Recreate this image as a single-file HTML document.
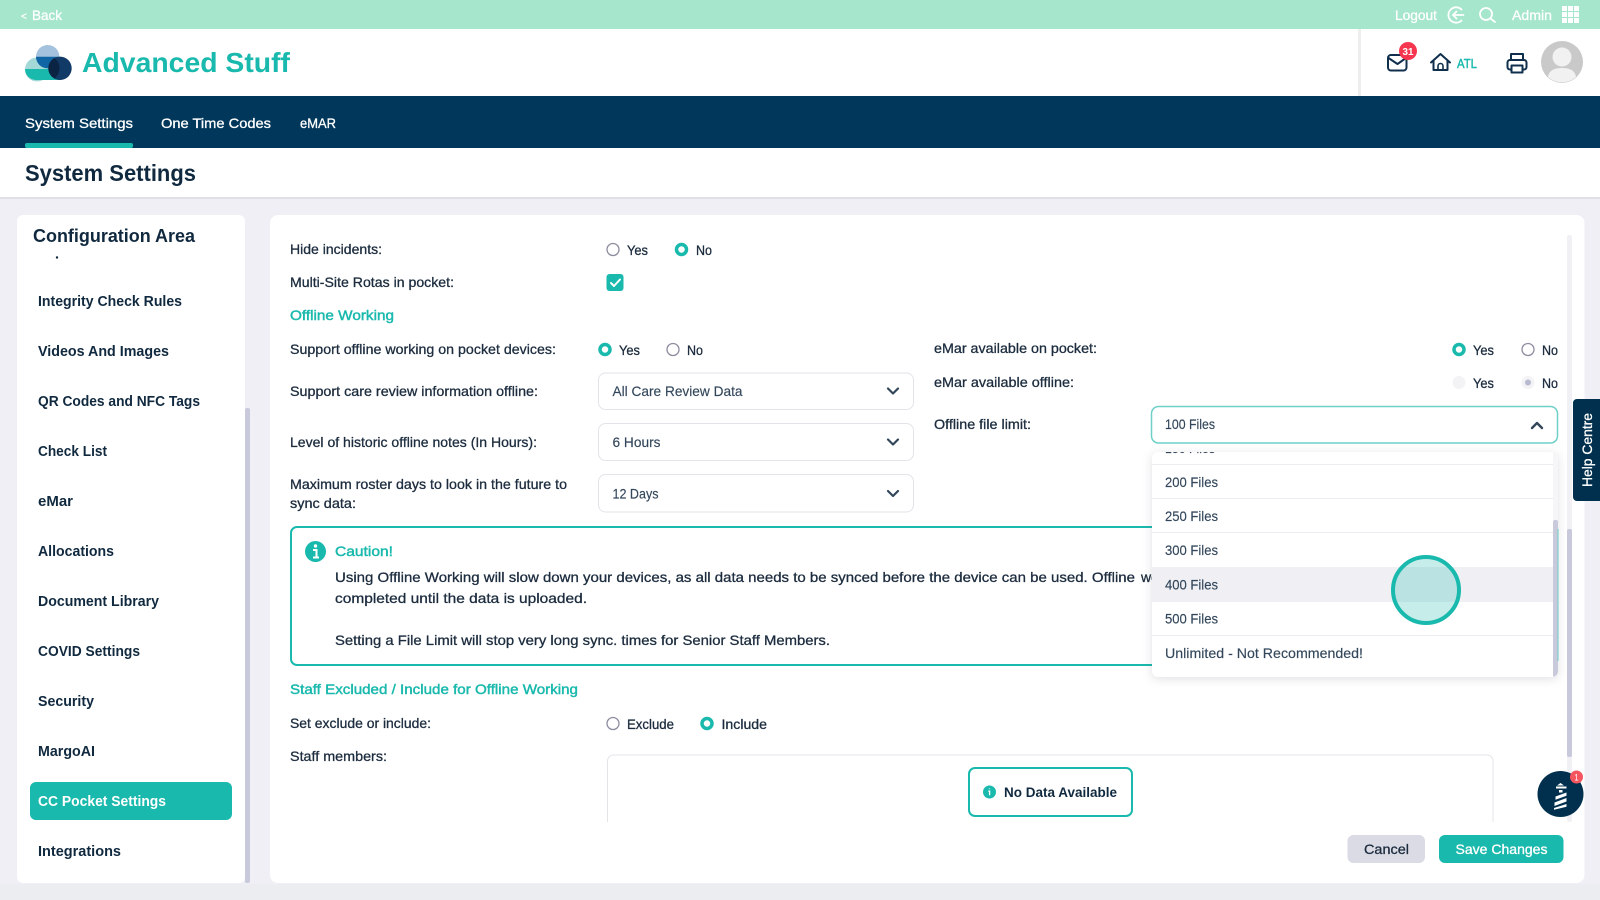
<!DOCTYPE html>
<html lang="en"><head><meta charset="utf-8"><title>System Settings</title>
<style>
html,body{margin:0;padding:0;background:#efeff5;width:1600px;height:900px;overflow:hidden}
svg{display:block;font-family:"Liberation Sans",sans-serif}
text{font-size:14px;fill:#1c2c3e;stroke:#1c2c3e;stroke-width:.3px}
.w{fill:#fff;stroke:#fff}
.b{font-weight:bold;stroke:none}
.t{fill:#1ab9ad;stroke:#1ab9ad;stroke-width:.45px}
.o{fill:#33475b;stroke:#33475b;stroke-width:.15px}
.n{font-weight:bold;stroke:none;fill:#10293f;font-size:14.5px}
</style></head><body>
<svg width="1600" height="900" viewBox="0 0 1600 900" xmlns="http://www.w3.org/2000/svg">
<defs><clipPath id="dd"><rect x="1152" y="452" width="406" height="225" rx="6"/></clipPath></defs>
<!-- page -->
<rect width="1600" height="900" fill="#efeff5"/>
<rect y="884" width="1600" height="16" fill="#ecedf1"/>
<rect width="1600" height="29" fill="#a6e6cd"/>
<rect y="29" width="1600" height="67" fill="#fff"/>
<rect x="1358" y="29" width="3" height="67" fill="#eeeeee"/>
<rect y="96" width="1600" height="52" fill="#00375a"/>
<rect x="25" y="143" width="108" height="5" rx="2" fill="#1ab9ad"/>
<rect y="148" width="1600" height="49" fill="#fff"/>
<rect y="197" width="1600" height="2" fill="#dfdfe8"/>

<!-- top bar -->
<text class="w" x="21" y="19.500" style="font-size:10px">&lt;</text>
<text class="w" x="32" y="20" textLength="30" lengthAdjust="spacingAndGlyphs">Back</text>
<text class="w" x="1395" y="20" textLength="42" lengthAdjust="spacingAndGlyphs">Logout</text>
<g fill="none" stroke="#fff" stroke-width="1.800" stroke-linecap="round">
<path d="M1461.500 9.500a7.700 7.700 0 1 0 0 11"/><path d="M1463.500 15h-10.500M1456.500 11.500l-3.500 3.500 3.500 3.500"/>
<circle cx="1486" cy="14" r="6"/><path d="M1490.500 18.500l4.500 3.500"/>
</g>
<text class="w" x="1512" y="20" textLength="40" lengthAdjust="spacingAndGlyphs">Admin</text>
<g fill="#fff">
<rect x="1562" y="6" width="5" height="5"/><rect x="1568" y="6" width="5" height="5"/><rect x="1574" y="6" width="5" height="5"/>
<rect x="1562" y="12" width="5" height="5"/><rect x="1568" y="12" width="5" height="5"/><rect x="1574" y="12" width="5" height="5"/>
<rect x="1562" y="18" width="5" height="5"/><rect x="1568" y="18" width="5" height="5"/><rect x="1574" y="18" width="5" height="5"/>
</g>

<!-- logo -->
<circle cx="47.700" cy="56.700" r="11.700" fill="#a4c2dd"/>
<circle cx="37" cy="69.500" r="12" fill="#a5d9d8"/>
<rect x="37" y="63" width="23" height="7" fill="#a5d9d8"/>
<path d="M36 56.700a11.700 11.700 0 0 0 23.400 0z" fill="#1065a5"/>
<path d="M25 69h36v11H36a11 11 0 0 1-11-11z" fill="#1ab9ad"/>
<circle cx="60" cy="68.300" r="11.700" fill="#123a66"/>
<path d="M54.500 58a11.700 11.700 0 0 0 0 20.600a13 13 0 0 0 0-20.600z" fill="#0b2444"/>
<text x="82" y="72" style="font-size:28px;fill:#1ab9ad;stroke:none;font-weight:bold" textLength="208" lengthAdjust="spacingAndGlyphs">Advanced Stuff</text>

<!-- header icons -->
<g fill="none" stroke="#0f2f4c" stroke-width="2" stroke-linejoin="round" stroke-linecap="round">
<rect x="1388" y="55" width="18.500" height="15.500" rx="3"/><path d="M1388.500 58l9 6 8.500-6"/>
<path d="M1431 62.500l9.500-8.500 9.500 8.500M1433.500 60.500v9.500h14V60.500"/><path d="M1438 70v-4a2.500 2.500 0 0 1 5 0v4" stroke-width="1.600"/>
<path d="M1511 60v-6h12v6"/><rect x="1507.500" y="60" width="19" height="9.500" rx="2.500"/><path d="M1511.500 65.500h11v7h-11z" fill="#fff"/>
</g>
<circle cx="1408" cy="51" r="9" fill="#f5364e"/>
<text class="w" x="1402.500" y="55" style="font-size:10px;font-weight:bold;stroke:none" textLength="11" lengthAdjust="spacingAndGlyphs">31</text>
<text class="t" x="1457" y="68" style="font-size:13px" textLength="20" lengthAdjust="spacingAndGlyphs">ATL</text>
<circle cx="1562" cy="62" r="21" fill="#c9c9c9"/>
<circle cx="1562" cy="57" r="9.500" fill="#f1f1f1"/>
<path d="M1548 77c1-7 7-9 14-9s13 2 14 9a21 21 0 0 1-28 0z" fill="#f1f1f1"/>

<!-- nav -->
<text class="w" x="25" y="128" textLength="108" lengthAdjust="spacingAndGlyphs">System Settings</text>
<text class="w" x="161" y="128" textLength="110" lengthAdjust="spacingAndGlyphs">One Time Codes</text>
<text class="w" x="300" y="128" textLength="36" lengthAdjust="spacingAndGlyphs">eMAR</text>
<text class="b" x="25" y="181" style="font-size:23px;fill:#10293f" textLength="171" lengthAdjust="spacingAndGlyphs">System Settings</text>

<!-- sidebar -->
<rect x="17" y="215" width="228" height="668" rx="6" fill="#fff"/>
<rect x="245" y="408" width="5" height="475" rx="2" fill="#c8c9da"/>
<text class="b" x="33" y="242" style="font-size:18px;fill:#10293f" textLength="162" lengthAdjust="spacingAndGlyphs">Configuration Area</text>
<circle cx="57" cy="257.500" r="1.200" fill="#10293f"/>
<text class="n" x="38" y="306" textLength="144" lengthAdjust="spacingAndGlyphs">Integrity Check Rules</text>
<text class="n" x="38" y="356" textLength="131" lengthAdjust="spacingAndGlyphs">Videos And Images</text>
<text class="n" x="38" y="406" textLength="162" lengthAdjust="spacingAndGlyphs">QR Codes and NFC Tags</text>
<text class="n" x="38" y="456" textLength="69" lengthAdjust="spacingAndGlyphs">Check List</text>
<text class="n" x="38" y="506" textLength="35" lengthAdjust="spacingAndGlyphs">eMar</text>
<text class="n" x="38" y="556" textLength="76" lengthAdjust="spacingAndGlyphs">Allocations</text>
<text class="n" x="38" y="606" textLength="121" lengthAdjust="spacingAndGlyphs">Document Library</text>
<text class="n" x="38" y="656" textLength="102" lengthAdjust="spacingAndGlyphs">COVID Settings</text>
<text class="n" x="38" y="706" textLength="56" lengthAdjust="spacingAndGlyphs">Security</text>
<text class="n" x="38" y="756" textLength="57" lengthAdjust="spacingAndGlyphs">MargoAI</text>
<rect x="30" y="782" width="202" height="38" rx="6" fill="#1ab9ad"/>
<text class="n" x="38" y="806" style="fill:#fff" textLength="128" lengthAdjust="spacingAndGlyphs">CC Pocket Settings</text>
<text class="n" x="38" y="856" textLength="83" lengthAdjust="spacingAndGlyphs">Integrations</text>

<!-- main card -->
<rect x="270" y="215" width="1314.500" height="668" rx="8" fill="#fff"/>
<rect x="1567" y="235" width="5" height="587" rx="2" fill="#f1f1f5"/>
<rect x="1567" y="529" width="5" height="228" rx="2" fill="#c8c9da"/>

<text x="290" y="254" textLength="92" lengthAdjust="spacingAndGlyphs">Hide incidents:</text>
<circle cx="613" cy="249.500" r="6" fill="#fff" stroke="#8c8d9f" stroke-width="1.300"/>
<text x="627" y="255" textLength="21" lengthAdjust="spacingAndGlyphs">Yes</text>
<circle cx="681.500" cy="249.500" r="5" fill="#fff" stroke="#1ab9ad" stroke-width="3.500"/>
<text x="696" y="255" textLength="16" lengthAdjust="spacingAndGlyphs">No</text>

<text x="290" y="287" textLength="164" lengthAdjust="spacingAndGlyphs">Multi-Site Rotas in pocket:</text>
<rect x="606.500" y="274" width="17" height="17" rx="3" fill="#1ab9ad"/>
<path d="M611 283l3 3 6-6.500" fill="none" stroke="#fff" stroke-width="2" stroke-linecap="round" stroke-linejoin="round"/>

<text class="t" x="290" y="320" textLength="104" lengthAdjust="spacingAndGlyphs">Offline Working</text>

<text x="290" y="354" textLength="266" lengthAdjust="spacingAndGlyphs">Support offline working on pocket devices:</text>
<circle cx="605" cy="349.500" r="5" fill="#fff" stroke="#1ab9ad" stroke-width="3.500"/>
<text x="619" y="355" textLength="21" lengthAdjust="spacingAndGlyphs">Yes</text>
<circle cx="673" cy="349.500" r="6" fill="#fff" stroke="#8c8d9f" stroke-width="1.300"/>
<text x="687" y="355" textLength="16" lengthAdjust="spacingAndGlyphs">No</text>

<text x="290" y="396" textLength="248" lengthAdjust="spacingAndGlyphs">Support care review information offline:</text>
<rect x="598.500" y="373" width="315" height="36.500" rx="7" fill="#fff" stroke="#e3e3ea"/>
<text class="o" x="612.500" y="396" textLength="130" lengthAdjust="spacingAndGlyphs">All Care Review Data</text>
<path d="M888 388.500l5 5 5-5" fill="none" stroke="#33475b" stroke-width="2.200" stroke-linecap="round" stroke-linejoin="round"/>

<text x="290" y="447" textLength="247" lengthAdjust="spacingAndGlyphs">Level of historic offline notes (In Hours):</text>
<rect x="598.500" y="423.500" width="315" height="37" rx="7" fill="#fff" stroke="#e3e3ea"/>
<text class="o" x="612.500" y="447" textLength="48" lengthAdjust="spacingAndGlyphs">6 Hours</text>
<path d="M888 439.500l5 5 5-5" fill="none" stroke="#33475b" stroke-width="2.200" stroke-linecap="round" stroke-linejoin="round"/>

<text x="290" y="489" textLength="277" lengthAdjust="spacingAndGlyphs">Maximum roster days to look in the future to</text>
<text x="290" y="508" textLength="66" lengthAdjust="spacingAndGlyphs">sync data:</text>
<rect x="598.500" y="474.500" width="315" height="37.500" rx="7" fill="#fff" stroke="#e3e3ea"/>
<text class="o" x="612.500" y="498.500" textLength="46" lengthAdjust="spacingAndGlyphs">12 Days</text>
<path d="M888 491l5 5 5-5" fill="none" stroke="#33475b" stroke-width="2.200" stroke-linecap="round" stroke-linejoin="round"/>

<!-- right column -->
<text x="934" y="353" textLength="163" lengthAdjust="spacingAndGlyphs">eMar available on pocket:</text>
<circle cx="1459" cy="349.500" r="5" fill="#fff" stroke="#1ab9ad" stroke-width="3.500"/>
<text x="1473" y="388" textLength="21" lengthAdjust="spacingAndGlyphs">Yes</text>
<text x="1473" y="355" textLength="21" lengthAdjust="spacingAndGlyphs">Yes</text>
<circle cx="1528" cy="349.500" r="6" fill="#fff" stroke="#8c8d9f" stroke-width="1.300"/>
<text x="1542" y="355" textLength="16" lengthAdjust="spacingAndGlyphs">No</text>
<text x="934" y="387" textLength="140" lengthAdjust="spacingAndGlyphs">eMar available offline:</text>
<circle cx="1459" cy="382.500" r="6.500" fill="#f3f3f6"/>
<circle cx="1528" cy="382.500" r="6.500" fill="#f3f3f6"/><circle cx="1528" cy="382.500" r="3" fill="#b9bad0"/>
<text x="1542" y="388" textLength="16" lengthAdjust="spacingAndGlyphs">No</text>
<text x="934" y="429" textLength="97" lengthAdjust="spacingAndGlyphs">Offline file limit:</text>

<!-- caution -->
<rect x="291" y="527" width="1266" height="138" rx="6" fill="#fff" stroke="#1ab9ad" stroke-width="2"/>
<circle cx="315.500" cy="551.500" r="10.500" fill="#1ab9ad"/>
<circle cx="315.500" cy="546" r="1.700" fill="#fff"/>
<path d="M313 550h3.500v7M313 557.500h6" fill="none" stroke="#fff" stroke-width="2"/>
<text class="t" x="335" y="556" textLength="58" lengthAdjust="spacingAndGlyphs">Caution!</text>
<text x="335" y="582" textLength="800" lengthAdjust="spacingAndGlyphs">Using Offline Working will slow down your devices, as all data needs to be synced before the device can be used. Offline</text>
<text x="1141" y="582">working</text>
<text x="335" y="603" textLength="252" lengthAdjust="spacingAndGlyphs">completed until the data is uploaded.</text>
<text x="335" y="645" textLength="495" lengthAdjust="spacingAndGlyphs">Setting a File Limit will stop very long sync. times for Senior Staff Members.</text>

<text class="t" x="290" y="694" textLength="288" lengthAdjust="spacingAndGlyphs">Staff Excluded / Include for Offline Working</text>
<text x="290" y="728" textLength="141" lengthAdjust="spacingAndGlyphs">Set exclude or include:</text>
<circle cx="613" cy="723.500" r="6" fill="#fff" stroke="#8c8d9f" stroke-width="1.300"/>
<text x="627" y="729" textLength="47" lengthAdjust="spacingAndGlyphs">Exclude</text>
<circle cx="707" cy="723.500" r="5" fill="#fff" stroke="#1ab9ad" stroke-width="3.500"/>
<text x="721.500" y="729" textLength="45.500" lengthAdjust="spacingAndGlyphs">Include</text>
<text x="290" y="761" textLength="97" lengthAdjust="spacingAndGlyphs">Staff members:</text>

<path d="M607.500 822V761a6 6 0 0 1 6-6H1487a6 6 0 0 1 6 6v61" fill="#fff" stroke="#e6e3e8"/>
<rect x="969" y="768" width="163" height="48" rx="6" fill="#fff" stroke="#1ab9ad" stroke-width="2"/>
<circle cx="989.500" cy="792" r="6.500" fill="#1ab9ad"/>
<path d="M989.500 788.500v.8M988.300 791.200h1.300v4" fill="none" stroke="#fff" stroke-width="1.300"/>
<text class="b" x="1004" y="797" style="font-size:13.500px;fill:#10293f" textLength="113" lengthAdjust="spacingAndGlyphs">No Data Available</text>

<!-- buttons -->
<rect x="1347.500" y="835" width="77.500" height="28" rx="6" fill="#dadbe5"/>
<text x="1364" y="854" textLength="45" lengthAdjust="spacingAndGlyphs">Cancel</text>
<rect x="1439" y="835" width="124.500" height="28" rx="6" fill="#1ab9ad"/>
<text class="w" x="1455.500" y="854" textLength="92" lengthAdjust="spacingAndGlyphs">Save Changes</text>

<!-- selected dropdown -->
<rect x="1151.500" y="406.500" width="406" height="36.500" rx="7" fill="#fff" stroke="#6fd0c8" stroke-width="1.500"/>
<text class="o" x="1165" y="429" textLength="50" lengthAdjust="spacingAndGlyphs">100 Files</text>
<path d="M1532 428l5-5 5 5" fill="none" stroke="#33475b" stroke-width="2.400" stroke-linecap="round" stroke-linejoin="round"/>

<!-- dropdown panel -->
<rect x="1152" y="452" width="406" height="225" rx="6" fill="#fff" style="filter:drop-shadow(0 2px 5px rgba(60,60,90,.16))"/>
<g clip-path="url(#dd)">
<text class="o" x="1165" y="453" textLength="50" lengthAdjust="spacingAndGlyphs">150 Files</text>
<rect x="1152" y="567" width="401" height="35" fill="#f0f0f4"/>
<g fill="#ededf1">
<rect x="1152" y="464" width="401" height="1"/>
<rect x="1152" y="498" width="401" height="1"/>
<rect x="1152" y="532" width="401" height="1"/>
<rect x="1152" y="635" width="401" height="1"/>
</g>
<rect x="1553" y="452" width="5" height="225" fill="#f6f6f9"/>
<rect x="1553" y="520" width="5" height="157" rx="2" fill="#c8c9da"/>
</g>
<rect x="1557.500" y="529" width="1" height="132" fill="#6fd0c8"/>
<text class="o" x="1165" y="487" textLength="53" lengthAdjust="spacingAndGlyphs">200 Files</text>
<text class="o" x="1165" y="521" textLength="53" lengthAdjust="spacingAndGlyphs">250 Files</text>
<text class="o" x="1165" y="555" textLength="53" lengthAdjust="spacingAndGlyphs">300 Files</text>
<text class="o" x="1165" y="589.500" textLength="53" lengthAdjust="spacingAndGlyphs">400 Files</text>
<text class="o" x="1165" y="623.500" textLength="53" lengthAdjust="spacingAndGlyphs">500 Files</text>
<text class="o" x="1165" y="658" textLength="198" lengthAdjust="spacingAndGlyphs">Unlimited - Not Recommended!</text>

<circle cx="1426" cy="590" r="33" fill="#1ab9ad" fill-opacity=".25" stroke="#1ab9ad" stroke-width="4"/>

<!-- help tab -->
<path d="M1600 399h-23a4 4 0 0 0-4 4v94a4 4 0 0 0 4 4h23z" fill="#00304d"/>
<text class="w" transform="translate(1592 487) rotate(-90)" x="0" y="0" textLength="74" lengthAdjust="spacingAndGlyphs">Help Centre</text>

<!-- chat -->
<circle cx="1560.500" cy="794" r="23" fill="#00304d"/>
<g fill="#fff">
<path d="M1557 785.500l3.500-2.500 3.500 2.500z"/>
<rect x="1556" y="786.500" width="10.500" height="2"/>
<rect x="1559" y="790" width="3.500" height="2.500"/>
<path d="M1555.500 796.500l11-4v3.200l-11 4z"/>
<path d="M1554.500 802.500l12-4.500v3.500l-12 4.500z"/>
<path d="M1554 808l12.500-4v2.800l-12.500 3z"/>
</g>
<circle cx="1576.500" cy="777" r="6.500" fill="#f5555f"/>
<text class="w" x="1574.500" y="780.500" style="font-size:9.500px;stroke:none" textLength="4" lengthAdjust="spacingAndGlyphs">1</text>
</svg>
</body></html>
